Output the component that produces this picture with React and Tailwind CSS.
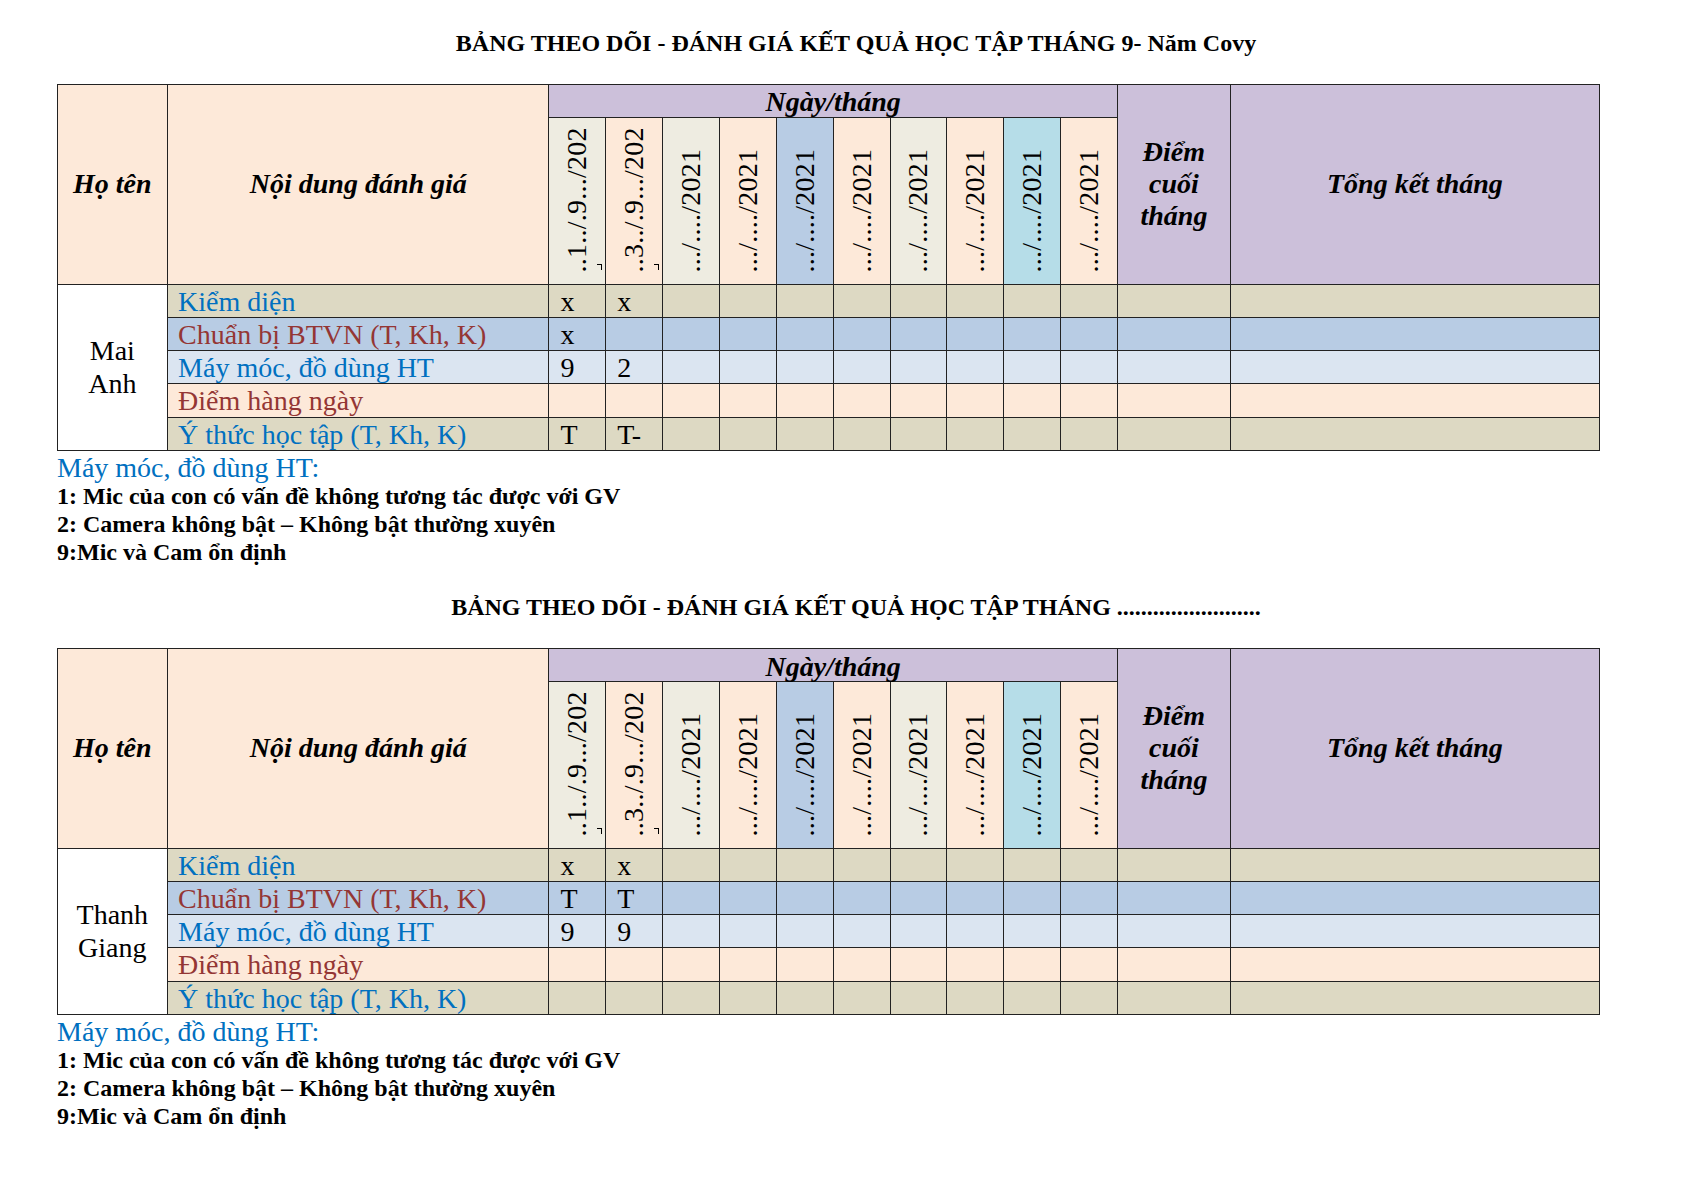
import React from "react";

const DATE_BG = [
  "bg-[#eeece1]",
  "bg-[#fde9d9]",
  "bg-[#eeece1]",
  "bg-[#fde9d9]",
  "bg-[#b8cce4]",
  "bg-[#fde9d9]",
  "bg-[#eeece1]",
  "bg-[#fde9d9]",
  "bg-[#b6dde8]",
  "bg-[#fde9d9]",
];

const ROWS = [
  { label: "Kiểm diện", text: "text-[#0070c0]", bg: "bg-[#ddd9c3]" },
  { label: "Chuẩn bị BTVN (T, Kh, K)", text: "text-[#943634]", bg: "bg-[#b8cce4]" },
  { label: "Máy móc, đồ dùng HT", text: "text-[#0070c0]", bg: "bg-[#dbe5f1]" },
  { label: "Điểm hàng ngày", text: "text-[#943634]", bg: "bg-[#fde9d9]" },
  { label: "Ý thức học tập (T, Kh, K)", text: "text-[#0070c0]", bg: "bg-[#ddd9c3]" },
];

const B = "border-r border-b border-[#222]";

function DateHead({ i, text, tick }) {
  return (
    <div className={`${B} ${DATE_BG[i]} relative flex justify-center overflow-hidden`}>
      <div className="[writing-mode:vertical-rl] [text-orientation:sideways] rotate-180 h-full pt-[11px] text-[28px] leading-[28px] tracking-[0.25px] whitespace-nowrap text-black">
        {text}
      </div>
      {tick && (
        <div className="absolute right-[3px] bottom-[14px] w-[5px] h-[6px]">
          <div className="absolute right-0 top-0 w-[1.5px] h-[6px] bg-black" />
          <div className="absolute right-0 top-0 w-[5px] h-[1.5px] bg-black" />
        </div>
      )}
    </div>
  );
}

function Table({ name, vals }) {
  const dates = [
    { t: "..1../.9.../202", tick: true },
    { t: "..3../.9.../202", tick: true },
    ...Array.from({ length: 8 }, () => ({ t: ".../..../2021", tick: false })),
  ];
  return (
    <div className="ml-[56.5px] w-fit grid grid-cols-[110.6px_381.4px_repeat(10,56.85px)_113px_369px] grid-rows-[33.2px_166.6px_repeat(5,33.2px)] border-l border-t border-[#222] text-black">
      <div className={`${B} row-span-2 bg-[#fde9d9] flex items-center justify-center font-bold italic text-[28px] leading-[32px]`}>
        Họ tên
      </div>
      <div className={`${B} row-span-2 bg-[#fde9d9] flex items-center justify-center font-bold italic text-[28px] leading-[32px]`}>
        Nội dung đánh giá
      </div>
      <div className={`${B} col-span-10 bg-[#ccc0da] text-center font-bold italic text-[28px] leading-[31px] pt-[1.5px]`}>
        Ngày/tháng
      </div>
      <div className={`${B} row-span-2 bg-[#ccc0da] flex items-center justify-center text-center font-bold italic text-[28px] leading-[32px]`}>
        <div>
          Điểm
          <br />
          cuối
          <br />
          tháng
        </div>
      </div>
      <div className={`${B} row-span-2 bg-[#ccc0da] flex items-center justify-center font-bold italic text-[28px] leading-[32px]`}>
        Tổng kết tháng
      </div>
      {dates.map((d, i) => (
        <DateHead key={i} i={i} text={d.t} tick={d.tick} />
      ))}
      <div className={`${B} row-span-5 bg-white flex items-center justify-center text-center text-[28px] leading-[33px]`}>
        <div>
          {name[0]}
          <br />
          {name[1]}
        </div>
      </div>
      {ROWS.map((r, ri) => (
        <React.Fragment key={ri}>
          <div className={`${B} ${r.bg} ${r.text} pl-[10px] pt-[1px] text-[28px] leading-[31px] whitespace-nowrap overflow-hidden`}>
            {r.label}
          </div>
          {Array.from({ length: 10 }, (_, ci) => (
            <div key={ci} className={`${B} ${r.bg} pl-[11px] pt-[1px] text-[28px] leading-[31px] whitespace-nowrap overflow-hidden`}>
              {(vals[ri] && vals[ri][ci]) || ""}
            </div>
          ))}
          <div className={`${B} ${r.bg}`} />
          <div className={`${B} ${r.bg}`} />
        </React.Fragment>
      ))}
    </div>
  );
}

function Section({ title, name, vals, first }) {
  return (
    <div className={first ? "pt-[28.6px]" : "pt-[27px]"}>
      <div className="pl-[28px] text-center text-[24px] leading-[28px] font-bold text-black whitespace-nowrap">
        {title}
      </div>
      <div className="mt-[27.4px]">
        <Table name={name} vals={vals} />
      </div>
      <div className="ml-[57px] mt-[3px] text-black">
        <div className="text-[28px] leading-[28px] text-[#0070c0]">Máy móc, đồ dùng HT:</div>
        <div className="text-[24px] leading-[28px] font-bold">1: Mic của con có vấn đề không tương tác được với GV</div>
        <div className="text-[24px] leading-[28px] font-bold">2: Camera không bật – Không bật thường xuyên</div>
        <div className="text-[24px] leading-[28px] font-bold">9:Mic và Cam ổn định</div>
      </div>
    </div>
  );
}

export default function App() {
  return (
    <div className="w-[1684px] h-[1191px] bg-white overflow-hidden font-['Liberation_Serif','Times_New_Roman',serif]">
      <Section
        first
        title="BẢNG THEO DÕI - ĐÁNH GIÁ KẾT QUẢ HỌC TẬP THÁNG 9- Năm Covy"
        name={["Mai", "Anh"]}
        vals={[["x", "x"], ["x"], ["9", "2"], [], ["T", "T-"]]}
      />
      <Section
        title="BẢNG THEO DÕI - ĐÁNH GIÁ KẾT QUẢ HỌC TẬP THÁNG ........................"
        name={["Thanh", "Giang"]}
        vals={[["x", "x"], ["T", "T"], ["9", "9"], [], []]}
      />
    </div>
  );
}
